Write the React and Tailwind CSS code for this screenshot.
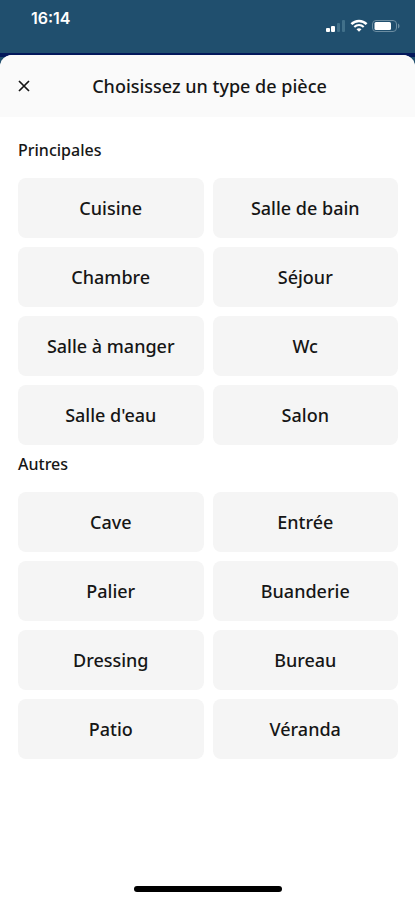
const sections = [
  {
    id: "principales",
    title: "Principales",
    rooms: ["Cuisine", "Salle de bain", "Chambre", "Séjour", "Salle à manger", "Wc", "Salle d'eau", "Salon"],
  },
  {
    id: "autres",
    title: "Autres",
    rooms: ["Cave", "Entrée", "Palier", "Buanderie", "Dressing", "Bureau", "Patio", "Véranda"],
  },
];

function SignalIcon() {
  return (
    <svg width="20" height="14" viewBox="0 0 20 14" aria-hidden="true">
      <rect x="0" y="9" width="4" height="4" rx="1" fill="#fff" />
      <rect x="5" y="7" width="4" height="6" rx="1" fill="#fff" />
      <rect x="11" y="4" width="3" height="9" rx="1" fill="#41708a" />
      <rect x="16" y="1" width="3" height="12" rx="1" fill="#41708a" />
    </svg>
  );
}

function WifiIcon() {
  return (
    <svg width="18" height="14" viewBox="0 0 18 14" fill="none" stroke="#fff" aria-hidden="true">
      <path d="M1.4 5.2C5.6 1 12.4 1 16.6 5.2" strokeWidth="2.5" />
      <path d="M4.3 8C7 5.4 11 5.4 13.7 8" strokeWidth="2.1" />
      <path d="M6.5 10.2C8 8.9 10 8.9 11.5 10.2L9 12.8Z" fill="#fff" stroke="none" />
    </svg>
  );
}

function BatteryIcon() {
  return (
    <svg width="28" height="14" viewBox="0 0 28 14" aria-hidden="true">
      <rect x="0.5" y="1.5" width="24" height="11" rx="3.5" fill="none" stroke="#6c8da1" />
      <rect x="2.5" y="3" width="16.5" height="8" rx="1.5" fill="#fff" />
      <path d="M26 4.5v5c2-.7 2-4.3 0-5Z" fill="#6c8da1" />
    </svg>
  );
}

function StatusBar() {
  return (
    <div className="flex h-[53px] items-start justify-between pr-[15px] pl-[31px] text-white">
      <span className="pt-2 font-['Inter',sans-serif] text-base leading-5 font-semibold">16:14</span>
      <div className="flex items-center gap-1 pt-[19px]">
        <SignalIcon />
        <WifiIcon />
        <BatteryIcon />
      </div>
    </div>
  );
}

function RoomSection({ section }) {
  return (
    <section aria-labelledby={section.id} className="flex flex-col gap-[18px]">
      <h2 id={section.id} className="text-base leading-5 font-medium">
        {section.title}
      </h2>
      <div className="grid grid-cols-2 gap-[9px]">
        {section.rooms.map((room) => (
          <button key={room} type="button" className="h-[60px] rounded-lg bg-[#f5f5f5] text-lg font-medium">
            {room}
          </button>
        ))}
      </div>
    </section>
  );
}

export default function App() {
  return (
    <div className="flex min-h-screen flex-col bg-[#204f6e] font-['Noto_Sans','Open_Sans',sans-serif] text-[#161616]">
      <StatusBar />
      <div className="flex grow flex-col bg-[linear-gradient(#03185b_0_4px,#204f6e_4px)]">
        <div className="mt-[2px] flex grow flex-col overflow-hidden rounded-t-xl bg-white">
          <header className="grid h-[62px] grid-cols-[48px_1fr_44px] items-center bg-[#fafafa]">
            <button type="button" aria-label="Fermer" className="flex h-12 items-center justify-center">
              <svg width="12" height="12" viewBox="0 0 12 12" fill="none" stroke="#161616" strokeWidth="1.7" aria-hidden="true">
                <path d="M1 1L11 11M11 1L1 11" />
              </svg>
            </button>
            <h1 className="text-center text-lg font-medium">Choisissez un type de pièce</h1>
          </header>
          <main className="flex grow flex-col gap-[9px] pt-[23px] pr-[17px] pl-[18px]">
            {sections.map((section) => (
              <RoomSection key={section.id} section={section} />
            ))}
          </main>
          <footer className="flex justify-center pb-[8px]">
            <div className="h-[6px] w-[148px] rounded-full bg-black" />
          </footer>
        </div>
      </div>
    </div>
  );
}
